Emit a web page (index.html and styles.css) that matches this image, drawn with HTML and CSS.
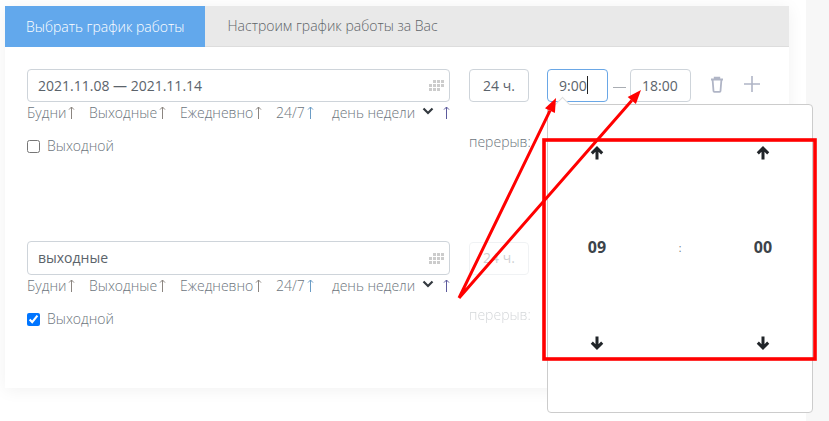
FILE: index.html
```html
<!DOCTYPE html>
<html lang="ru">
<head>
<meta charset="utf-8">
<title>График работы</title>
<link rel="stylesheet" href="styles.css">
</head>
<body>
<div class="page">
  <div class="card">
    <div class="tabs">
      <div class="tab tab-active">Выбрать график работы</div>
      <div class="tab tab-rest">Настроим график работы за Вас</div>
    </div>

    <div class="row">
      <div class="left">
        <div class="field date-field">
          <span>2021.11.08 — 2021.11.14</span>
          <svg class="cal" viewBox="0 0 16 12" width="16" height="12"><path d="M4 0h3v3H4zM8 0h3v3H8zM12 0h3v3h-3zM0 4h3v3H0zM4 4h3v3H4zM8 4h3v3H8zM12 4h3v3h-3zM0 8h3v3H0zM4 8h3v3H4zM8 8h3v3H8z"/></svg>
        </div>
        <div class="links">
          <span class="link l1">Будни<svg class="up" viewBox="0 0 7 13" width="7" height="13"><path d="M3.5 13V1M1 3.6L3.5 1 6 3.6"/></svg></span>
          <span class="link l2">Выходные<svg class="up" viewBox="0 0 7 13" width="7" height="13"><path d="M3.5 13V1M1 3.6L3.5 1 6 3.6"/></svg></span>
          <span class="link l3">Ежедневно<svg class="up" viewBox="0 0 7 13" width="7" height="13"><path d="M3.5 13V1M1 3.6L3.5 1 6 3.6"/></svg></span>
          <span class="link l4">24/7<svg class="up blue" viewBox="0 0 7 13" width="7" height="13"><path d="M3.5 13V1M1 3.6L3.5 1 6 3.6"/></svg></span>
          <span class="link l5">день недели</span>
          <svg class="chev" viewBox="0 0 12 8" width="12" height="8"><path d="M1.5 1.5L6 6l4.5-4.5"/></svg>
          <svg class="up violet" viewBox="0 0 7 13" width="7" height="13"><path d="M3.5 13V1M1 3.6L3.5 1 6 3.6"/></svg>
        </div>
        <label class="check"><input type="checkbox"><span>Выходной</span></label>
      </div>
      <div class="right">
        <div class="times">
          <div class="field hours">24 ч.</div>
          <div class="field time focus"><span>9:00</span><b class="caret"></b></div>
          <span class="dash"></span>
          <div class="field time">18:00</div>
          <svg class="trash" viewBox="0 0 14 17" width="14" height="17"><path d="M1 3.5h12M4.7 3.2V1.6h4.6v1.6M2.6 3.8l.9 11.2c0 .5.4.9.9.9h5.2c.5 0 .9-.4.9-.9l.9-11.2"/></svg>
          <svg class="plus" viewBox="0 0 16 16" width="16" height="16"><path d="M8 0v16M0 8h16"/></svg>
        </div>
        <div class="pause">перерыв:</div>
      </div>
    </div>

    <div class="row">
      <div class="left">
        <div class="field date-field tall">
          <span>выходные</span>
          <svg class="cal" viewBox="0 0 16 12" width="16" height="12"><path d="M4 0h3v3H4zM8 0h3v3H8zM12 0h3v3h-3zM0 4h3v3H0zM4 4h3v3H4zM8 4h3v3H8zM12 4h3v3h-3zM0 8h3v3H0zM4 8h3v3H4zM8 8h3v3H8z"/></svg>
        </div>
        <div class="links">
          <span class="link l1">Будни<svg class="up" viewBox="0 0 7 13" width="7" height="13"><path d="M3.5 13V1M1 3.6L3.5 1 6 3.6"/></svg></span>
          <span class="link l2">Выходные<svg class="up" viewBox="0 0 7 13" width="7" height="13"><path d="M3.5 13V1M1 3.6L3.5 1 6 3.6"/></svg></span>
          <span class="link l3">Ежедневно<svg class="up" viewBox="0 0 7 13" width="7" height="13"><path d="M3.5 13V1M1 3.6L3.5 1 6 3.6"/></svg></span>
          <span class="link l4">24/7<svg class="up blue" viewBox="0 0 7 13" width="7" height="13"><path d="M3.5 13V1M1 3.6L3.5 1 6 3.6"/></svg></span>
          <span class="link l5">день недели</span>
          <svg class="chev" viewBox="0 0 12 8" width="12" height="8"><path d="M1.5 1.5L6 6l4.5-4.5"/></svg>
          <svg class="up violet" viewBox="0 0 7 13" width="7" height="13"><path d="M3.5 13V1M1 3.6L3.5 1 6 3.6"/></svg>
        </div>
        <label class="check"><input type="checkbox" checked><span>Выходной</span></label>
      </div>
      <div class="right dim">
        <div class="times tall-times">
          <div class="field hours">24 ч.</div>
        </div>
        <div class="pause">перерыв:</div>
      </div>
    </div>
  </div>

  <div class="popup">
    <div class="picker">
      <svg class="arrow" viewBox="0 0 14 14" width="14" height="14"><path d="M7 13.5V2.5M1.8 7.4L7 2.2l5.2 5.2"/></svg>
      <span></span>
      <svg class="arrow" viewBox="0 0 14 14" width="14" height="14"><path d="M7 13.5V2.5M1.8 7.4L7 2.2l5.2 5.2"/></svg>
      <strong>09</strong>
      <em>:</em>
      <strong>00</strong>
      <svg class="arrow" viewBox="0 0 14 14" width="14" height="14"><path d="M7 .5v11M1.8 6.6L7 11.8l5.2-5.2"/></svg>
      <span></span>
      <svg class="arrow" viewBox="0 0 14 14" width="14" height="14"><path d="M7 .5v11M1.8 6.6L7 11.8l5.2-5.2"/></svg>
    </div>
  </div>

  <svg class="notes" viewBox="0 0 829 421" width="829" height="421">
    <rect x="544" y="140" width="271" height="219"/>
    <path d="M459 298L550 110.6M459 298L631.8 100.5"/>
    <polygon points="556,98 545,108.2 554.9,113"/>
    <polygon points="641,90 627.7,96.9 635.9,104.1"/>
  </svg>
</div>
</body>
</html>
```
FILE: styles.css
```css
* { box-sizing: border-box; }
html, body { margin: 0; height: 100%; overflow: hidden; background: #f7f7f7; }
body { font-family: "Open Sans", "Liberation Sans", sans-serif; font-size: 14px; color: #495057; }

.page { position: relative; width: 806px; height: 421px; background: #fff; padding: 6px 0 0 5px; }
.card { width: 784px; height: 382px; background: #fff; box-shadow: 0 2px 16px rgba(0, 0, 0, .06); }

.tabs { display: flex; height: 41px; }
.tab { display: flex; align-items: center; font-weight: 300; padding-bottom: 1px; }
.tab-active { width: 200px; padding-left: 21px; background: #62a8ec; color: #fff; }
.tab-rest { flex: 1; padding-left: 22.5px; background: #e9e9e9; border-bottom: 1px solid #ddd; color: #5e6468; }

.row { display: flex; gap: 19px; height: 172px; padding: 22px 0 0 22px; }
.left { width: 423px; }

.field { display: flex; align-items: center; height: 33px; border: 1px solid #ced4da; border-radius: 4px; background: #fff; font-size: 14px; color: #5b636b; padding-bottom: 1px; }
.date-field { justify-content: space-between; padding: 0 4px 1px 10px; }
.tall { height: 34px; }
.cal { fill: #ccc; margin-top: 2px; }

.links { display: flex; align-items: center; height: 22px; font-weight: 300; color: #6c757d; padding-bottom: 2px; }
.link { display: flex; align-items: center; white-space: nowrap; }
.l1 { width: 62px; }
.l2 { width: 91px; }
.l3 { width: 96px; }
.l4 { width: 56px; }
.l5 { width: 90px; }
.up { flex: none; margin-left: 2px; fill: none; stroke: #8b8580; stroke-width: 1; }
.blue { stroke: #6b9cc5; }
.violet { stroke: #5c5a9c; margin-left: 9px; }
.chev { fill: none; stroke: #343a40; stroke-width: 2.2; flex: none; margin-top: -3px; }

.check { display: flex; align-items: center; gap: 7px; margin-top: 11px; height: 22px; font-weight: 300; color: #6c757d; padding-bottom: 2px; }
.check input { margin: 2px 0 0; width: 13px; height: 13px; }

.right { flex: 1; }
.dim { opacity: .3; }
.times { display: flex; align-items: center; height: 33px; }
.tall-times { height: 34px; }
.hours { width: 60px; justify-content: center; }
.time { width: 61px; padding-left: 11px; margin-left: 18px; }
.dash { width: 13px; height: 1px; margin: 4px 4px 0 5px; background: #a9adb3; }
.time + .dash + .time { margin-left: 0; }
.focus { border-color: #6aa7e6; }
.caret { display: block; width: 1px; height: 18px; background: #222; }
.trash { fill: none; stroke: #b0b5c6; stroke-width: 1.8; margin-left: 19px; margin-top: -3px; flex: none; }
.plus { fill: none; stroke: #b0b5c6; stroke-width: 1.6; margin-left: 20px; margin-top: -3px; flex: none; }
.pause { width: 61px; height: 22px; overflow: hidden; margin-top: 30px; font-weight: 300; color: #6c757d; white-space: nowrap; }

.popup { position: absolute; left: 547px; top: 104px; width: 266px; height: 309px; background: #fff; border: 1px solid #ccc; border-radius: 4px; }
.popup::before { content: ""; position: absolute; left: 9px; top: -6px; width: 10px; height: 10px; background: #fff; border: 1px solid #ddd; border-right: 0; border-bottom: 0; transform: rotate(45deg); }
.picker { display: grid; grid-template-columns: 98px 1fr 98px; grid-auto-rows: 95px; align-items: center; justify-items: center; }
.picker strong { font-size: 16px; font-weight: 700; color: #3c434a; margin-bottom: 2px; }
.picker em { font-style: normal; font-size: 10px; color: #6c757d; }
.arrow { fill: none; stroke: #212529; stroke-width: 3; }

.notes { position: absolute; left: 0; top: 0; pointer-events: none; }
.notes rect { fill: none; stroke: #f00; stroke-width: 3.6; }
.notes path { fill: none; stroke: #f00; stroke-width: 3; }
.notes polygon { fill: #f00; }
```
